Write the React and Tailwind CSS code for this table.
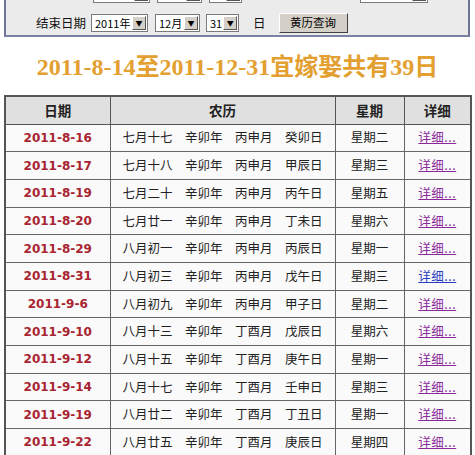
import React from 'react';

const rows = [
  ['2011-8-16', '七月十七', '辛卯年', '丙申月', '癸卯日', '星期二'],
  ['2011-8-17', '七月十八', '辛卯年', '丙申月', '甲辰日', '星期三'],
  ['2011-8-19', '七月二十', '辛卯年', '丙申月', '丙午日', '星期五'],
  ['2011-8-20', '七月廿一', '辛卯年', '丙申月', '丁未日', '星期六'],
  ['2011-8-29', '八月初一', '辛卯年', '丙申月', '丙辰日', '星期一'],
  ['2011-8-31', '八月初三', '辛卯年', '丙申月', '戊午日', '星期三', true],
  ['2011-9-6', '八月初九', '辛卯年', '丙申月', '甲子日', '星期二'],
  ['2011-9-10', '八月十三', '辛卯年', '丁酉月', '戊辰日', '星期六'],
  ['2011-9-12', '八月十五', '辛卯年', '丁酉月', '庚午日', '星期一'],
  ['2011-9-14', '八月十七', '辛卯年', '丁酉月', '壬申日', '星期三'],
  ['2011-9-19', '八月廿二', '辛卯年', '丁酉月', '丁丑日', '星期一'],
  ['2011-9-22', '八月廿五', '辛卯年', '丁酉月', '庚辰日', '星期四'],
];

const cjk = { fontFamily: '"Noto Sans CJK SC", "Noto Sans", sans-serif' };

// old-style windows select box
function FakeSelect({ label, w, arrow = true }) {
  return (
    <div className={`flex h-[18px] items-center border border-[#7a7a7a] bg-white ${w}`}>
      <span className="flex-1 pl-[3px] text-[11px] leading-none text-black">{label}</span>
      <span className="m-[1px] flex h-[14px] w-[14px] items-center justify-center border border-t-white border-l-white border-r-[#555] border-b-[#555] bg-[#d4d0c8] text-[7px] leading-none text-black">
        {arrow ? '▼' : ''}
      </span>
    </div>
  );
}

export default function App() {
  return (
    <div className="w-[475px] bg-white" style={cjk}>
      {/* query panel, first row scrolled off the top */}
      <div className="mx-[4px] w-[466px] border-x-2 border-b-2 border-x-[#6e7494] border-b-[#7c82a6] bg-[#ebebeb]">
        <div className="mt-[-16px] flex h-[19px] items-end pl-[87px] gap-[7px]">
          <FakeSelect label="" w="w-[57px]" arrow={false} />
          <FakeSelect label="" w="w-[45px]" arrow={false} />
          <FakeSelect label="" w="w-[33px]" arrow={false} />
          <div className="w-[104px]" />
          <FakeSelect label="" w="w-[68px]" arrow={false} />
        </div>
        <div className="flex h-[22px] items-center pl-[30px] pb-[1px] pt-[9px] box-content">
          <span className="text-[12.5px] text-[#111] mr-[5px]">结束日期</span>
          <FakeSelect label="2011年" w="w-[57px]" />
          <div className="w-[7px]" />
          <FakeSelect label="12月" w="w-[45px]" />
          <div className="w-[6px]" />
          <FakeSelect label="31" w="w-[33px]" />
          <span className="ml-[14px] text-[12.5px] text-[#111]">日</span>
          <button className="ml-[13px] flex h-[20px] w-[69px] items-center justify-center border border-t-white border-l-white border-r-[#404040] border-b-[#404040] bg-[#d4d0c8] text-[11.5px] text-black">
            黄历查询
          </button>
        </div>
      </div>

      {/* title */}
      <div
        className="flex h-[58px] items-center justify-center pt-[2px] text-[24px] font-bold text-[#e3a030]"
        style={{ fontFamily: '"Liberation Serif", "Noto Sans CJK SC", serif' }}
      >
        2011-8-14至2011-12-31宜嫁娶共有39日
      </div>

      {/* results table */}
      <table className="ml-[4px] w-[466px] table-fixed border-collapse border-2 border-[#555]">
        <colgroup>
          <col className="w-[105px]" />
          <col className="w-[225px]" />
          <col className="w-[69px]" />
          <col className="w-[67px]" />
        </colgroup>
        <thead>
          <tr className="h-[28px] bg-[#e0e0e0]">
            {['日期', '农历', '星期', '详细'].map((h) => (
              <th key={h} className="border border-[#555] text-center text-[13.5px] font-bold text-[#222]">{h}</th>
            ))}
          </tr>
        </thead>
        <tbody>
          {rows.map((r) => (
            <tr key={r[0]} className="h-[27.7px] bg-[#fafafa]">
              <td
                className="border border-[#666] text-center text-[12px] font-bold text-[#a82430]"
                style={{ fontFamily: '"DejaVu Sans", sans-serif' }}
              >
                {r[0]}
              </td>
              <td className="border border-[#666] text-center text-[12.5px] text-[#222] whitespace-pre">
                {r[1] + '　' + r[2] + '　' + r[3] + '　' + r[4]}
              </td>
              <td className="border border-[#666] text-center text-[12.5px] text-[#222]">{r[5]}</td>
              <td className="border border-[#666] text-center text-[12.5px]">
                <a href="#" className={`underline tracking-[0.5px] ${r[6] ? 'text-[#2a3cc0]' : 'text-[#8a2a9a]'}`}>详细...</a>
              </td>
            </tr>
          ))}
        </tbody>
      </table>
    </div>
  );
}
